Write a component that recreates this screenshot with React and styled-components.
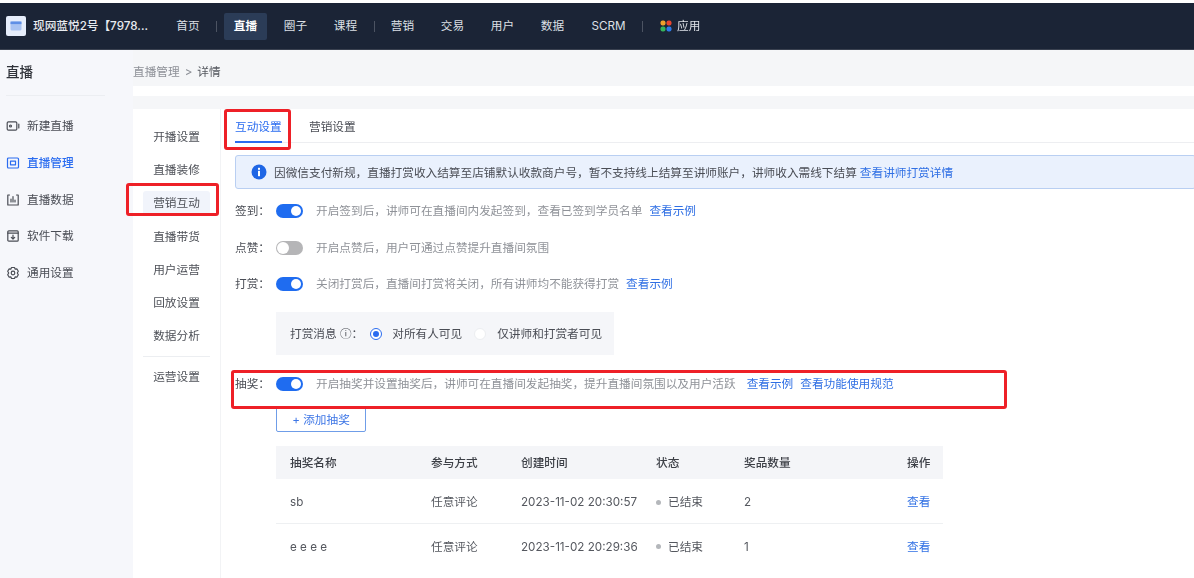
import React from "react";
import styled, { createGlobalStyle } from "styled-components";

const Global = createGlobalStyle`
  html, body { margin: 0; padding: 0; height: 100%; overflow: hidden; background: #fff; }
  body { font-family: Inter, "Noto Sans CJK SC", "Noto Sans", sans-serif; font-size: 11.67px; line-height: 20px; color: #4a4d55; }
  * { box-sizing: border-box; }
`;

const Page = styled.div`
  position: relative;
  width: 1194px;
  height: 578px;
  padding-top: 3px;
  overflow: hidden;
  filter: blur(0.35px);
`;
const TopBar = styled.header`
  height: 47px;
  background: #1b2436;
  border-bottom: 1px solid #3a4150;
  display: flex;
  align-items: center;
  padding-left: 6px;
  color: #dfe2e8;
`;
const Logo = styled.div`
  width: 20px;
  height: 20px;
  border-radius: 2px;
  background: #e6edfb;
  display: flex;
  align-items: center;
  justify-content: center;
  margin-right: 7px;
`;
const Shop = styled.div`
  font-weight: 500;
  color: #e8ebf0;
  width: 133px;
  white-space: nowrap;
`;
const NavItem = styled.div`
  height: 27px;
  padding: 0 10px;
  width: ${(p) => p.$w ?? 43}px;
  margin-right: ${(p) => p.$gap ?? 7}px;
  flex: none;
  display: flex;
  align-items: center;
  justify-content: center;
  white-space: nowrap;
  border-radius: 2px;
  font-weight: ${(p) => (p.$active ? 700 : 400)};
  color: ${(p) => (p.$active ? "#ffffff" : "#dde0e6")};
  background: ${(p) => (p.$active ? "#2b3c57" : "transparent")};
`;
const NavSep = styled.span`
  width: 1px;
  height: 11px;
  background: #4c5362;
  margin: 0 ${(p) => p.$r ?? 2}px 0 ${(p) => p.$l ?? 2}px;
`;
const Apps = styled.div`
  display: flex;
  align-items: center;
  gap: 5px;
  margin-left: 17px;
`;
const Body = styled.div`
  display: flex;
  height: 528px;
`;
const Side = styled.aside`
  width: 133px;
  background: #f6f7fb;
  padding: 0 6px;
  flex: none;
`;
const SideTitle = styled.div`
  height: 46px;
  padding-top: 11px;
  border-bottom: 1px solid #eceef2;
  margin-right: 22px;
  font-size: 13.5px;
  font-weight: 500;
  color: #30333a;
  line-height: 22px;
`;
const SideList = styled.div`
  display: flex;
  flex-direction: column;
  gap: 14.75px;
  padding-top: 19px;
`;
const SideItem = styled.div`
  height: 22px;
  display: flex;
  align-items: center;
  gap: 7px;
  font-weight: ${(p) => (p.$active ? 500 : 400)};
  color: ${(p) => (p.$active ? "#2a6cf0" : "#4a4d55")};
`;
const Main = styled.main`
  flex: 1;
  background: #f5f6f8;
  min-width: 0;
`;
const Crumb = styled.div`
  height: 36px;
  padding-top: 12px;
  color: #8d9097;
  display: flex;
  gap: 5px;
`;
const CrumbNow = styled.span`
  color: #55585f;
`;
const Strip = styled.div`
  height: 10px;
  background: #fff;
`;
const Panel = styled.div`
  margin-top: 13px;
  background: #fff;
  display: flex;
  height: 469px;
`;
const SubNav = styled.nav`
  width: 88px;
  flex: none;
  border-right: 1px solid #f2f3f5;
  padding: 11.5px 10px 0;
  display: flex;
  flex-direction: column;
  align-items: stretch;
`;
const SubItem = styled.div`
  height: 25px;
  margin: 4.1px 0;
  display: flex;
  align-items: center;
  justify-content: center;
  border-radius: 3px;
  background: ${(p) => (p.$active ? "#f1f4fb" : "transparent")};
  color: #4d5057;
`;
const SubDivider = styled.div`
  height: 1px;
  background: #eceef1;
  margin: 3px 0 4px;
`;
const Content = styled.section`
  flex: 1;
  min-width: 0;
  padding-left: 14px;
`;
const Tabs = styled.div`
  height: 34px;
  display: flex;
  border-bottom: 1px solid #edeef1;
  gap: 27px;
`;
const Tab = styled.div`
  height: 34px;
  width: 47px;
  white-space: nowrap;
  padding-top: 8px;
  color: ${(p) => (p.$active ? "#2a6cf0" : "#4a4d55")};
  border-bottom: ${(p) => (p.$active ? "2px solid #2a6cf0" : "none")};
`;
const Alert = styled.div`
  margin-top: 12px;
  height: 34px;
  margin-right: -2px;
  background: #eaf1fd;
  border: 1px solid #b9cff2;
  border-radius: 3px;
  display: flex;
  align-items: center;
  gap: 7px;
  padding-left: 15px;
  color: #4a4d55;
  white-space: nowrap;
`;
const AlertText = styled.span`
  padding-top: 1px;
`;
const Link = styled.a`
  color: #2f6fe4;
  margin-left: ${(p) => p.$ml ?? 0}px;
`;
const Rows = styled.div`
  margin-top: 12px;
`;
const Row = styled.div`
  height: 20px;
  margin-top: ${(p) => p.$mt ?? 0}px;
  margin-bottom: ${(p) => p.$mb}px;
  display: flex;
  align-items: center;
  white-space: nowrap;
`;
const Label = styled.span`
  width: 41px;
  flex: none;
  color: #4a4d55;
`;
const Toggle = styled.span`
  width: 27px;
  height: 14px;
  border-radius: 7px;
  flex: none;
  margin-right: 13px;
  padding: ${(p) => (p.$on ? 2 : 1)}px;
  display: flex;
  justify-content: ${(p) => (p.$on ? "flex-end" : "flex-start")};
  background: ${(p) => (p.$on ? "#1f6cf0" : "#b5b5b7")};
  &::after {
    content: "";
    width: ${(p) => (p.$on ? 10 : 12)}px;
    height: ${(p) => (p.$on ? 10 : 12)}px;
    border-radius: 50%;
    background: #fff;
  }
`;
const Hint = styled.span`
  color: #8f9298;
`;
const SubBox = styled.div`
  margin-left: 41px;
  width: 338px;
  height: 43px;
  background: #f5f6f9;
  display: flex;
  align-items: center;
  padding-left: 14px;
  white-space: nowrap;
`;
const Radio = styled.span`
  width: 12px;
  height: 12px;
  border-radius: 50%;
  flex: none;
  margin: ${(p) => p.$m};
  background: #fff;
  border: 1px solid ${(p) => (p.$on ? "#2a6cf0" : "#eceef1")};
  display: flex;
  align-items: center;
  justify-content: center;
  &::after {
    content: "";
    width: 6px;
    height: 6px;
    border-radius: 50%;
    background: ${(p) => (p.$on ? "#2a6cf0" : "transparent")};
  }
`;
const AddBtn = styled.button`
  display: block;
  margin: 0 0 14px 41px;
  width: 90px;
  height: 25px;
  background: #fff;
  border: 1px solid #6f9de8;
  border-radius: 2px;
  color: #3d76e6;
  font: inherit;
  padding: 0;
`;
const Table = styled.div`
  margin-left: 41px;
  width: 667px;
`;
const TRow = styled.div`
  display: grid;
  grid-template-columns: 141px 90px 135px 88px 1fr 36px;
  align-items: center;
  padding-left: 14px;
  padding-top: ${(p) => p.$pt ?? 0}px;
  height: ${(p) => (p.$head ? 33 : 45)}px;
  background: ${(p) => (p.$head ? "#f4f5f8" : "#fff")};
  color: ${(p) => (p.$head ? "#3c3f46" : "#55585f")};
  font-weight: ${(p) => (p.$head ? 500 : 400)};
  border-bottom: ${(p) => (p.$last || p.$head ? "none" : "1px solid #eef0f2")};
  white-space: nowrap;
`;
const Status = styled.span`
  display: flex;
  align-items: center;
  gap: 7px;
  &::before {
    content: "";
    width: 5px;
    height: 5px;
    border-radius: 50%;
    background: #b4b7bb;
  }
`;
const Annot = styled.div`
  position: absolute;
  left: ${(p) => p.$x}px;
  top: ${(p) => p.$y}px;
  width: ${(p) => p.$w}px;
  height: ${(p) => p.$h}px;
  border: 3px solid #ee2027;
  border-radius: 3px;
  pointer-events: none;
`;

const Ico = ({ children, color = "#4a4d55" }) => (
  <svg width="14" height="14" viewBox="0 0 14 14" fill="none" stroke={color} strokeWidth="1.2" strokeLinejoin="round" strokeLinecap="round" style={{ flex: "none" }}>
    {children}
  </svg>
);

const sideItems = [
  ["新建直播", <><rect x="1.2" y="2.8" width="9.6" height="8.4" rx="1.2" /><circle cx="4.5" cy="7" r="1" /><path d="M12.8 5v4" /></>],
  ["直播管理", <><rect x="1.5" y="2" width="11" height="10" rx="1" /><rect x="4.5" y="5.2" width="5" height="3.6" /></>, true],
  ["直播数据", <><path d="M3.5 2H1.8v10h10.4V2h-1.7" /><path d="M5 9V6M7 9V3.5M9 9V7" /></>],
  ["软件下载", <><rect x="1.8" y="1.8" width="10.4" height="10.4" rx="1" /><path d="M1.8 4.2h10.4M7 6v4M5.3 8.4 7 10l1.7-1.6" /></>],
  ["通用设置", <><path d="M5.5 1.5h3l.6 1.6 1.7-.3 1.5 2.5-1 1.7 1 1.7-1.5 2.5-1.7-.3-.6 1.6h-3l-.6-1.6-1.7.3L1.7 8.7l1-1.7-1-1.7 1.5-2.5 1.7.3z" /><circle cx="7" cy="7" r="1.8" /></>],
];

const subItems = ["开播设置", "直播装修", "营销互动", "直播带货", "用户运营", "回放设置", "数据分析"];

const rows = [
  ["sb", "任意评论", "2023-11-02 20:30:57", "2"],
  ["e e e e", "任意评论", "2023-11-02 20:29:36", "1"],
];

export default function App() {
  return (
    <Page>
      <Global />
      <TopBar>
        <Logo>
          <svg width="12" height="12" viewBox="0 0 12 12">
            <rect x="0.5" y="1.5" width="11" height="9" rx="1.5" fill="#a9c3f2" />
            <rect x="0.5" y="1.5" width="11" height="2.6" fill="#5f8fe6" />
          </svg>
        </Logo>
        <Shop>现网蓝悦2号【7978...</Shop>
        <NavItem $gap={0} $w={44}>首页</NavItem>
        <NavSep $l={6} $r={7} />
        <NavItem $active>直播</NavItem>
        <NavItem>圈子</NavItem>
        <NavItem $gap={0}>课程</NavItem>
        <NavSep $l={7} $r={6} />
        <NavItem>营销</NavItem>
        <NavItem>交易</NavItem>
        <NavItem>用户</NavItem>
        <NavItem>数据</NavItem>
        <NavItem $gap={0} $w={55}>SCRM</NavItem>
        <NavSep $l={6} $r={0} />
        <Apps>
          <svg width="12" height="12" viewBox="0 0 12 12">
            <rect x="0.5" y="0.5" width="5" height="5" rx="2" fill="#f0a02a" />
            <rect x="6.5" y="0.5" width="5" height="5" rx="2" fill="#e8452f" />
            <rect x="0.5" y="6.5" width="5" height="5" rx="2" fill="#36b35a" />
            <rect x="6.5" y="6.5" width="5" height="5" rx="2" fill="#2f7be8" />
          </svg>
          应用
        </Apps>
      </TopBar>
      <Body>
        <Side>
          <SideTitle>直播</SideTitle>
          <SideList>
            {sideItems.map(([t, d, a]) => (
              <SideItem key={t} $active={a}>
                <Ico color={a ? "#2a6cf0" : "#4a4d55"}>{d}</Ico>
                {t}
              </SideItem>
            ))}
          </SideList>
        </Side>
        <Main>
          <Crumb>
            直播管理 <span>&gt;</span> <CrumbNow>详情</CrumbNow>
          </Crumb>
          <Strip />
          <Panel>
            <SubNav>
              {subItems.map((t) => (
                <SubItem key={t} $active={t === "营销互动"}>{t}</SubItem>
              ))}
              <SubDivider />
              <SubItem>运营设置</SubItem>
            </SubNav>
            <Content>
              <Tabs>
                <Tab $active>互动设置</Tab>
                <Tab>营销设置</Tab>
              </Tabs>
              <Alert>
                <svg width="16" height="16" viewBox="0 0 16 16" style={{ flex: "none" }}>
                  <circle cx="8" cy="8" r="7.5" fill="#1f66e5" />
                  <rect x="7" y="6.8" width="2" height="5.4" fill="#fff" />
                  <rect x="7" y="3.8" width="2" height="2" fill="#fff" />
                </svg>
                <AlertText>
                  因微信支付新规，直播打赏收入结算至店铺默认收款商户号，暂不支持线上结算至讲师账户，讲师收入需线下结算
                  <Link $ml={3}>查看讲师打赏详情</Link>
                </AlertText>
              </Alert>
              <Rows>
                <Row $mb={16.5}>
                  <Label>签到：</Label>
                  <Toggle $on />
                  <Hint>开启签到后，讲师可在直播间内发起签到，查看已签到学员名单</Hint>
                  <Link $ml={7}>查看示例</Link>
                </Row>
                <Row $mb={16.5}>
                  <Label>点赞：</Label>
                  <Toggle />
                  <Hint>开启点赞后，用户可通过点赞提升直播间氛围</Hint>
                </Row>
                <Row $mb={18}>
                  <Label>打赏：</Label>
                  <Toggle $on />
                  <Hint>关闭打赏后，直播间打赏将关闭，所有讲师均不能获得打赏</Hint>
                  <Link $ml={7}>查看示例</Link>
                </Row>
                <SubBox>
                  打赏消息 ⓘ：
                  <Radio $on $m="0 10px 0 7px" />
                  对所有人可见
                  <Radio $m="0 11px 0 12px" />
                  仅讲师和打赏者可见
                </SubBox>
                <Row $mt={19} $mb={13}>
                  <Label>抽奖：</Label>
                  <Toggle $on />
                  <Hint>开启抽奖并设置抽奖后，讲师可在直播间发起抽奖，提升直播间氛围以及用户活跃</Hint>
                  <Link $ml={11}>查看示例</Link>
                  <Link $ml={7}>查看功能使用规范</Link>
                </Row>
                <AddBtn>+ 添加抽奖</AddBtn>
                <Table>
                  <TRow $head>
                    <span>抽奖名称</span>
                    <span>参与方式</span>
                    <span>创建时间</span>
                    <span>状态</span>
                    <span>奖品数量</span>
                    <span>操作</span>
                  </TRow>
                  {rows.map((r, i) => (
                    <TRow key={r[0]} $last={i === 1} $pt={i === 0 ? 2 : 0}>
                      <span>{r[0]}</span>
                      <span>{r[1]}</span>
                      <span>{r[2]}</span>
                      <Status>已结束</Status>
                      <span>{r[3]}</span>
                      <Link>查看</Link>
                    </TRow>
                  ))}
                </Table>
              </Rows>
            </Content>
          </Panel>
        </Main>
      </Body>
      <Annot $x={224} $y={109} $w={67} $h={41} />
      <Annot $x={126} $y={183} $w={93} $h={33} />
      <Annot $x={231} $y={370} $w={776} $h={39} />
    </Page>
  );
}
